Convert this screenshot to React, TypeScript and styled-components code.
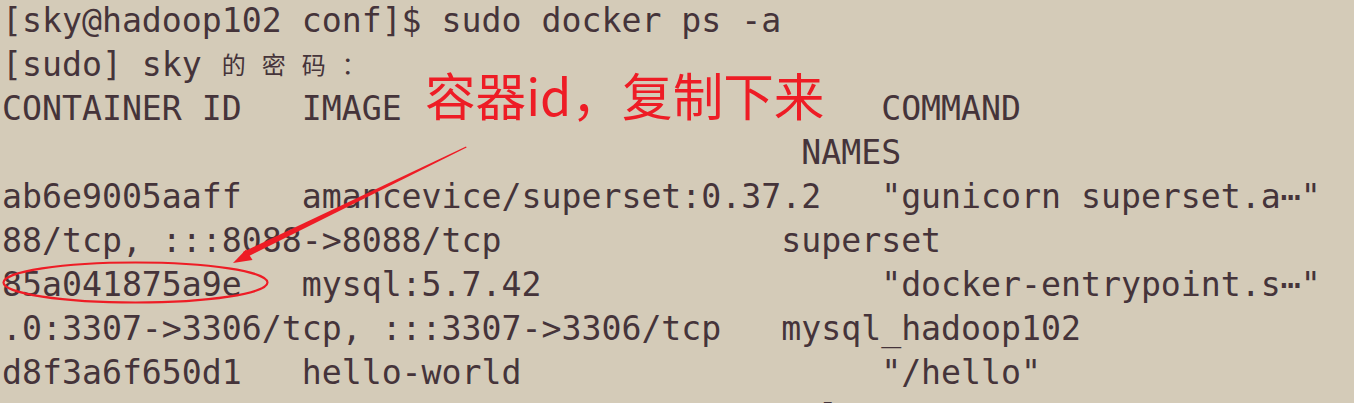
import React from "react";
import styled, { createGlobalStyle } from "styled-components";

const Global = createGlobalStyle`
  html, body {
    margin: 0;
    padding: 0;
    background: #d4cbb8;
    overflow: hidden;
  }
`;

const Screen = styled.div`
  position: relative;
  width: 1354px;
  height: 403px;
  overflow: hidden;
  background: #d4cbb8;
`;

const Terminal = styled.div`
  display: flex;
  flex-direction: column;
  padding: 0 0 0 2px;
  margin-top: -1px;
  font-family: "DejaVu Sans Mono", "Noto Sans CJK SC", monospace;
  font-size: 33.2px;
  line-height: 44px;
  color: #45343a;
`;

const Line = styled.div`
  white-space: pre;
  height: 44px;
`;

const Wide = styled.span`
  display: inline-block;
  width: 40px;
  font-family: "Noto Sans CJK SC", sans-serif;
  font-size: 24px;
  position: relative;
  top: -2px;
`;

const Annotation = styled.div`
  position: absolute;
  left: 425px;
  top: 69px;
  font-family: "Noto Sans CJK SC", "Noto Sans", sans-serif;
  font-size: 50.6px;
  line-height: 1;
  color: #ee1c25;
  white-space: nowrap;
`;

const Marks = styled.svg`
  position: absolute;
  left: 0;
  top: 0;
  pointer-events: none;
`;

const lines: string[] = [
  "[sky@hadoop102 conf]$ sudo docker ps -a",
  "",
  "CONTAINER ID   IMAGE                        COMMAND",
  "                                        NAMES",
  'ab6e9005aaff   amancevice/superset:0.37.2   "gunicorn superset.a⋯"',
  "88/tcp, :::8088->8088/tcp              superset",
  '85a041875a9e   mysql:5.7.42                 "docker-entrypoint.s⋯"',
  ".0:3307->3306/tcp, :::3307->3306/tcp   mysql_hadoop102",
  'd8f3a6f650d1   hello-world                  "/hello"',
  "                                        elegant_moore",
];

export default function App() {
  return (
    <Screen>
      <Global />
      <Terminal>
        {lines.map((l, i) =>
          i === 1 ? (
            <Line key={i}>
              {"[sudo] sky "}
              <Wide>的</Wide>
              <Wide>密</Wide>
              <Wide>码</Wide>
              <Wide>：</Wide>
            </Line>
          ) : (
            <Line key={i}>{l}</Line>
          )
        )}
      </Terminal>
      <Annotation>容器id，复制下来</Annotation>
      <Marks width="1354" height="403" viewBox="0 0 1354 403">
        <polygon
          points="466,146.5 466.6,147.6 246,257.5 243,252"
          fill="#ee1c25"
        />
        <polygon points="233,263 246,249.5 252.5,260" fill="#ee1c25" />
        <ellipse
          cx="135.5"
          cy="282.5"
          rx="132"
          ry="20"
          fill="none"
          stroke="#ee1c25"
          strokeWidth="2.2"
        />
      </Marks>
    </Screen>
  );
}
